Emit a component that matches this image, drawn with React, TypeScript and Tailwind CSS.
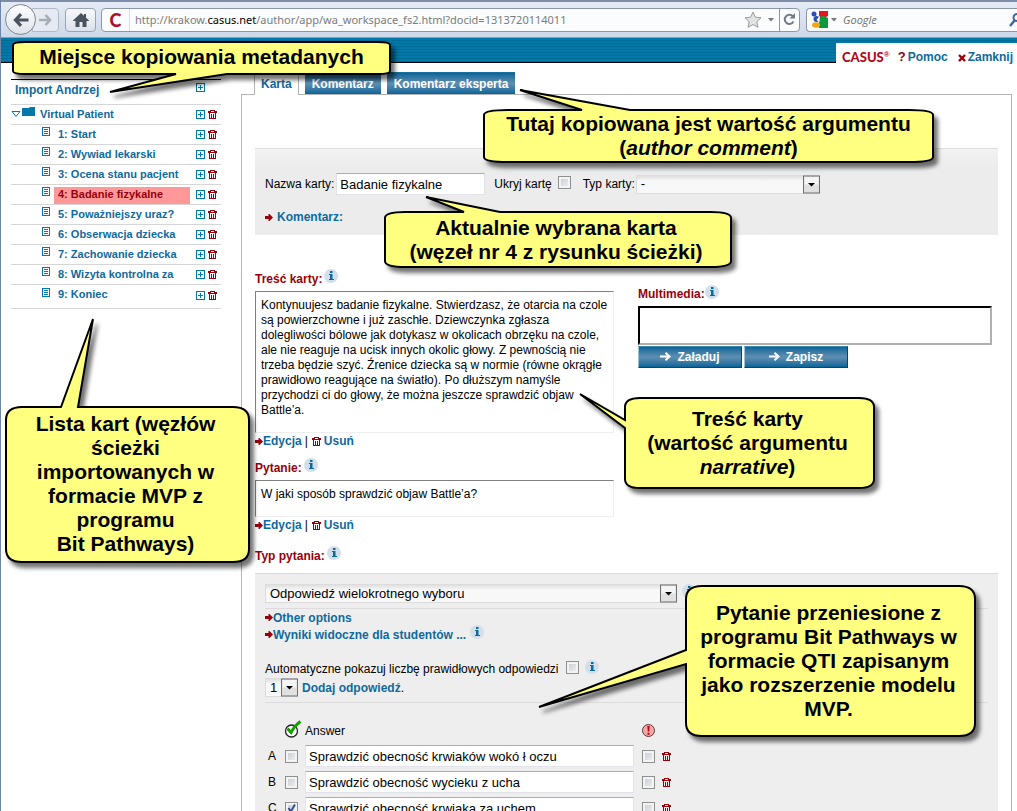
import React, { ReactNode } from "react";

const pages = [
  "1: Start",
  "2: Wywiad lekarski",
  "3: Ocena stanu pacjent",
  "4: Badanie fizykalne",
  "5: Poważniejszy uraz?",
  "6: Obserwacja dziecka",
  "7: Zachowanie dziecka",
  "8: Wizyta kontrolna za",
  "9: Koniec",
];

const answers = [
  { id: "A", text: "Sprawdzić obecność krwiaków wokó ł oczu", correct: false },
  { id: "B", text: "Sprawdzić obecność wycieku z ucha", correct: false },
  { id: "C", text: "Sprawdzić obecność krwiaka za uchem", correct: true },
];

function PlusIcon() {
  return (
    <svg width="9" height="9" viewBox="0 0 9 9" fill="none" stroke="#0079a8" shapeRendering="crispEdges" className="block">
      <path d="M.5.5h8v8h-8zM2 4.5h5M4.5 2v5" />
    </svg>
  );
}

function TrashIcon() {
  return (
    <svg width="9" height="9" viewBox="0 0 9 9" fill="none" stroke="#98000c" shapeRendering="crispEdges" className="block">
      <path d="M2 .5h5M0 1.5h3M6 1.5h3M0 2.5h9M1.5 3v6M3.5 4v4M5.5 4v4M7.5 3v6M1 8.5h7" />
    </svg>
  );
}

function DocIcon() {
  return (
    <svg width="8" height="9" viewBox="0 0 8 9" fill="none" stroke="#0079a8" shapeRendering="crispEdges" className="block">
      <path d="M.5.5h7v8h-7zM2 2.5h4M2 4.5h4M2 6.5h4" />
    </svg>
  );
}

function RedArrow() {
  return (
    <svg width="8" height="7" viewBox="0 0 8 7" fill="#98000c" className="block shrink-0">
      <path d="M0 2h3.500V0H4.500L8 3.500L4.500 7H3.500V5H0z" />
    </svg>
  );
}

function InfoIcon() {
  return (
    <svg width="14" height="14" viewBox="0 0 14 14" className="block shrink-0">
      <circle cx="7" cy="7" r="7" fill="#d3dfe8" />
      <path d="M6 2h2.500v2H6zM5 5h3.500v5H10v1H5v-1h1V6H5z" fill="#0a6a9c" />
    </svg>
  );
}

function Check({ label, checked = false }: { label: string; checked?: boolean }) {
  return (
    <span className="relative inline-block size-[13px] shrink-0 align-middle">
      <input
        type="checkbox"
        aria-label={label}
        defaultChecked={checked}
        className="peer block size-[13px] appearance-none border border-[#8e8f8f] bg-linear-to-br from-[#c4c9d0] to-[#f3f3f3] shadow-[inset_0_0_0_2px_#f4f4f4]"
      />
      <svg viewBox="0 0 13 13" className="pointer-events-none absolute inset-0 hidden peer-checked:block" fill="none" stroke="#33509a" strokeWidth="2">
        <path d="M3.500 6l2.300 3.500L10 2.500" />
      </svg>
    </span>
  );
}

function Drop({ label, value, className, field }: { label: string; value: string; className: string; field: string }) {
  return (
    <span className={"relative inline-block " + className}>
      <select
        id={field}
        aria-label={label}
        className="block h-full w-full appearance-none border border-[#dcdcdc] bg-linear-to-b from-[#e0e0e0] from-0% to-[#f8f8f8] to-30% pl-1 text-[13px] leading-4 text-black"
      >
        <option>{value}</option>
      </select>
      <svg width="17" height="18" viewBox="0 0 17 18" className="pointer-events-none absolute top-0 right-0 h-full">
        <rect x=".5" y=".5" width="16" height="17" fill="#e0e0e0" stroke="#6f6f6f" />
        <path d="M1.500 9V1.500h14V9" fill="#f5f5f5" />
        <path d="M5 7.500h7L8.500 11z" fill="#000" />
      </svg>
    </span>
  );
}

function EditLinks() {
  return (
    <div className="flex h-4 items-center font-bold text-[#0e6a9e]">
      <RedArrow />
      <a href="#edycja">Edycja</a>
      <span className="mx-[3px] font-normal text-black">|</span>
      <span className="mr-[3px] ml-px">
        <TrashIcon />
      </span>
      <a href="#usun">Usuń</a>
    </div>
  );
}

function SectionLabel({ children }: { children: ReactNode }) {
  return (
    <div className="flex h-6 items-start gap-[2px] pt-[2px] font-bold text-[#98000c]">
      <span className="pt-[2px] leading-4">{children}</span>
      <InfoIcon />
    </div>
  );
}

function Callout({ className, shape, children }: { className: string; shape: string; children: ReactNode }) {
  return (
    <div className={"absolute flex items-center justify-center text-center text-[21px] leading-6 font-bold text-black " + className}>
      <svg className="absolute inset-0 h-full w-full overflow-visible drop-shadow-[4px_5px_2px_rgba(0,0,0,0.55)]">
        <path d={shape} fill="#ffff80" stroke="#000" strokeWidth="2" strokeLinejoin="miter" strokeMiterlimit="3" />
      </svg>
      <p className="relative whitespace-nowrap">{children}</p>
    </div>
  );
}

function BrowserBar() {
  return (
    <header className="flex h-[38px] shrink-0 items-center border-t-2 border-b border-t-[#7f8ea8] border-b-[#8f9bb0] bg-linear-to-b from-[#e4ebf6] to-[#ccd8ea] pl-1 font-['Open_Sans',sans-serif] text-[12px]">
      <button aria-label="Wstecz" className="z-10 flex size-[31px] shrink-0 items-center justify-center rounded-full border border-[#7d8590] bg-linear-to-b from-white to-[#dfe3ea]">
        <svg width="16" height="14" viewBox="0 0 16 14" fill="none" stroke="#4a535e" strokeWidth="3.200">
          <path d="M8 1.200L2.500 7 8 12.800M3 7h12.500" />
        </svg>
      </button>
      <button aria-label="Dalej" className="-ml-1 flex h-6 w-[27px] shrink-0 items-center justify-center rounded-r border border-[#b0b8c4] bg-[#e6ebf3]">
        <svg width="13" height="12" viewBox="0 0 13 12" fill="none" stroke="#a6adb6" strokeWidth="2.600">
          <path d="M6.500 1L11 6l-4.500 5M10.500 6H0" />
        </svg>
      </button>
      <button aria-label="Strona główna" className="ml-[6px] flex h-6 w-[31px] shrink-0 items-center justify-center rounded border border-[#9aa3b1] bg-linear-to-b from-[#f6f8fb] to-[#dde3ec]">
        <svg width="16" height="14" viewBox="0 0 16 14" fill="#4a535e">
          <path d="M8 0l3 2.800V1h2v3.700L16 7.500V8h-2.500v6h-4V9h-3v5h-4V8H0v-.5z" />
        </svg>
      </button>
      <div className="ml-[5px] flex h-6 min-w-0 flex-1 items-center rounded border border-[#8d96a4] bg-[#fbfcfe]">
        <span className="flex w-7 shrink-0 justify-center border-r border-[#d5dbe4] font-['Lato',sans-serif] text-[18px] leading-[22px] font-black text-[#a8132b]">C</span>
        <div className="ml-[5px] min-w-0 flex-1 truncate font-['Noto_Sans',sans-serif] text-[11px] text-[#7b7b7b]">
          http://krakow.<span className="text-black">casus.net</span>/author/app/wa_workspace_fs2.html?docid=1313720114011
        </div>
        <svg width="18" height="17" viewBox="0 0 18 17" fill="#e3e3e3" stroke="#9b9b9b" className="shrink-0">
          <path d="M9 1l2.300 5.200 5.700.6-4.200 3.900 1.200 5.600L9 13.500l-5 2.800 1.200-5.600L1 6.800l5.700-.6z" />
        </svg>
        <svg width="6" height="4" viewBox="0 0 6 4" className="mr-[5px] ml-[6px] shrink-0"><path d="M0 0h6L3 3.500z" fill="#777" /></svg>
        <button aria-label="Odśwież" className="flex h-full w-5 shrink-0 items-center justify-center border-l border-[#8d96a4]">
          <svg width="13" height="13" viewBox="0 0 13 13" fill="none" stroke="#747b84" strokeWidth="2">
            <path d="M10 3.500A4.600 4.600 0 1 0 10.500 8.500" />
            <path d="M12 0v5.500H6.500z" fill="#747b84" stroke="none" />
          </svg>
        </button>
      </div>
      <div className="ml-[6px] flex h-6 w-[211px] shrink-0 items-center rounded-l border border-r-0 border-[#8d96a4] bg-[#fbfcfe] pl-1">
        <svg width="17" height="17" viewBox="0 0 17 17" className="shrink-0">
          <path d="M8 0h9v5L8 9z" fill="#e8161c" />
          <path d="M8 9q1-5 5-4l4 2v10H8z" fill="#0a9a3c" />
          <circle cx="3" cy="3" r="2.500" fill="#2a4fb5" />
          <circle cx="5.500" cy="8" r="3" fill="#2a4fb5" />
          <path d="M9 4.500L5.500 9l3 2z" fill="#fff" />
          <ellipse cx="5" cy="14" rx="4" ry="2.800" fill="#f3a512" />
        </svg>
        <svg width="6" height="4" viewBox="0 0 6 4" className="mr-[4px] ml-[3px] shrink-0"><path d="M0 0h6L3 3.500z" fill="#777" /></svg>
        <input aria-label="Google" placeholder="Google" className="ml-[2px] min-w-0 flex-1 bg-transparent text-[11px] italic placeholder:text-[#6f6f6f]" />
        <svg width="12" height="14" viewBox="0 0 12 14" fill="none" stroke="#3f66a5" strokeWidth="2" className="-mr-1 shrink-0">
          <circle cx="8" cy="4.500" r="3.500" />
          <path d="M5.500 7.500L1 13" strokeWidth="2.500" />
        </svg>
      </div>
    </header>
  );
}

function Sidebar() {
  return (
    <nav className="w-[240px] shrink-0 pt-4 pr-5 pl-[10px] text-[11px] font-bold text-[#0e6a9e]">
      <div className="flex h-[26px] items-start justify-between border-t border-b border-t-black border-b-[#d6d6d6] pr-4 pl-1">
        <a href="#import" className="pt-[2px] text-[12px] leading-4">Import Andrzej</a>
        <button aria-label="Dodaj" className="pt-[3px]"><PlusIcon /></button>
      </div>
      <div className="flex h-5 items-center border-b border-[#d6d6d6] pr-1">
        <svg width="10" height="7" viewBox="0 0 10 7" fill="none" stroke="#0079a8" className="shrink-0"><path d="M1 .5h8L5 5.500z" /></svg>
        <svg width="13" height="9" viewBox="0 0 13 9" fill="#0079a8" className="mb-[6px] ml-px shrink-0"><path d="M0 1h7l1-1h5v9H0z" /></svg>
        <a href="#vp" className="ml-[5px] flex-1 pb-[2px]">Virtual Patient</a>
        <button aria-label="Dodaj" className="mr-[3px]"><PlusIcon /></button>
        <button aria-label="Usuń"><TrashIcon /></button>
      </div>
      <ul className="h-[184px] border-b border-[#d6d6d6]">
        {pages.map((p, i) => (
          <li key={p} className={"flex h-5 items-center pr-1 " + (i < 8 ? "border-b border-[#d6d6d6]" : "")}>
            <span className="mr-1 mb-[6px] ml-[31px]"><DocIcon /></span>
            <a href={"#" + (i + 1)} className={"flex h-[17px] w-[136px] items-center pl-1 whitespace-nowrap " + (i === 3 ? "mt-[2px] bg-[#ff9999] pb-[3px] text-[#98000c]" : "pb-[2px]")}>{p}</a>
            <button aria-label="Dodaj" className="mr-[3px] ml-auto"><PlusIcon /></button>
            <button aria-label="Usuń"><TrashIcon /></button>
          </li>
        ))}
      </ul>
    </nav>
  );
}

const tabClass = "flex h-[22px] items-center border-t border-[#1b6f9c] bg-linear-to-b from-[#00659a] via-[#5f8fb0] to-[#00659a] px-[7px] text-white";
const btnClass = "flex h-[22px] w-[104px] items-center justify-center gap-[6px] border border-t-[#3d8bb5] border-r-[#1c3f55] border-b-[#1c3f55] border-l-[#9fc2d6] bg-linear-to-b from-[#00659a] via-[#5f8fb0] to-[#00659a] pb-px font-bold text-white";

function WhiteArrow() {
  return (
    <svg width="11" height="9" viewBox="0 0 11 9" fill="none" stroke="#fff" strokeWidth="2"><path d="M0 4.500h9M5.500 .8l4 3.700-4 3.700" /></svg>
  );
}

function Workspace() {
  return (
    <main className="flex min-w-0 flex-1 flex-col pt-[9px] pr-[5px]">
      <div className="flex items-end pl-[13px] font-bold">
        <button className="relative -mb-px flex h-[23px] items-center border-r border-l border-[#b4b4b4] bg-white px-[6px] text-[#0e6a9e]">Karta</button>
        <button className={"ml-[6px] " + tabClass}>Komentarz</button>
        <button className={"ml-[6px] " + tabClass}>Komentarz eksperta</button>
      </div>
      <div className="flex-1 border-t border-r border-l border-[#b4b4b4] px-[13px] pt-[53px]">
        <section className="h-[87px] border-t border-[#dcdcdc] bg-linear-to-b from-[#f3f3f3] to-[#ececec] to-20% px-[10px] pt-6">
          <div className="flex h-[22px] items-center">
            <label htmlFor="name">Nazwa karty:</label>
            <input id="name" defaultValue="Badanie fizykalne" className="ml-[2px] h-[22px] w-[149px] border border-[#e2e3ea] border-t-[#abadb3] bg-white pl-[3px] text-[13px]" />
            <span className="mr-[6px] ml-[9px]">Ukryj kartę</span>
            <span className="mb-1"><Check label="Ukryj kartę" /></span>
            <label htmlFor="type" className="ml-3">Typ karty:</label>
            <Drop field="type" label="Typ karty" value="-" className="ml-px h-[19px] w-[184px]" />
          </div>
          <div className="mt-[14px] flex h-4 items-center font-bold text-[#0e6a9e]">
            <RedArrow />
            <a href="#komentarz" className="ml-1">Komentarz:</a>
          </div>
        </section>

        <div className="mt-8 flex gap-6">
          <section className="w-[359px] shrink-0">
            <SectionLabel>Treść karty:</SectionLabel>
            <div className="h-[142px] border border-t-[#808080] border-r-[#eeeeee] border-b-[#eeeeee] border-l-[#808080] px-[5px] pt-[6px] leading-[15px]">
              Kontynuujesz badanie fizykalne. Stwierdzasz, że otarcia na czole
              <br />są powierzchowne i już zaschłe. Dziewczynka zgłasza
              <br />dolegliwości bólowe jak dotykasz w okolicach obrzęku na czole,
              <br />ale nie reaguje na ucisk innych okolic głowy. Z pewnością nie
              <br />trzeba będzie szyć. Źrenice dziecka są w normie (równe okrągłe
              <br />prawidłowo reagujące na światło). Po dłuższym namyśle
              <br />przychodzi ci do głowy, że można jeszcze sprawdzić objaw
              <br />Battle’a.
            </div>
            <EditLinks />
            <div className="mt-[7px]"><SectionLabel>Pytanie:</SectionLabel></div>
            <div className="h-[37px] border border-t-[#808080] border-r-[#eeeeee] border-b-[#eeeeee] border-l-[#808080] px-[5px] pt-[6px] leading-[15px]">
              W jaki sposób sprawdzić objaw Battle’a?
            </div>
            <EditLinks />
            <div className="mt-[11px]"><SectionLabel>Typ pytania:</SectionLabel></div>
          </section>
          <section className="mr-[6px] min-w-0 flex-1 pt-[15px]">
            <div className="flex h-6 items-start pt-[3px] font-bold text-[#98000c]">
              <label htmlFor="media" className="pt-[1px] leading-4">Multimedia:</label>
              <InfoIcon />
            </div>
            <input id="media" className="block h-[39px] w-full border-2 border-t-black border-r-[#b0b0b0] border-b-[#b0b0b0] border-l-black bg-white" />
            <div className="mt-px flex gap-[2px]">
              <button className={btnClass}><WhiteArrow />Załaduj</button>
              <button className={btnClass}><WhiteArrow />Zapisz</button>
            </div>
          </section>
        </div>

        <section className="mt-[5px] h-[300px] border-t border-[#dcdcdc] bg-[#eeeeee] px-[10px] pt-[10px]">
          <div className="flex items-start gap-[5px] border-b border-[#dcdcdc] pb-[5px]">
            <Drop field="qtype" label="Typ pytania" value="Odpowiedź wielokrotnego wyboru" className="h-[19px] w-[412px]" />
            <InfoIcon />
          </div>
          <div className="flex h-[17px] items-center font-bold text-[#0e6a9e]">
            <RedArrow /><a href="#opcje">Other options</a>
          </div>
          <div className="flex h-[17px] items-center font-bold text-[#0e6a9e]">
            <RedArrow /><a href="#wyniki" className="mr-1">Wyniki widoczne dla studentów ...</a>
            <span className="mb-[5px]"><InfoIcon /></span>
          </div>
          <div className="mt-4 flex h-5 items-center">
            <span className="mr-2">Automatyczne pokazuj liczbę prawidłowych odpowiedzi</span>
            <span className="mr-[6px] mb-1"><Check label="Automatyczne pokazuj liczbę prawidłowych odpowiedzi" /></span>
            <span className="mb-1"><InfoIcon /></span>
          </div>
          <div className="-mt-px flex items-center border-b border-[#dcdcdc] pb-[5px]">
            <Drop field="count" label="Liczba odpowiedzi" value="1" className="mr-1 h-[19px] w-[33px]" />
            <a href="#dodaj" className="font-bold text-[#0e6a9e]">Dodaj odpowiedź</a>.
          </div>
          <table className="mt-[15px] table-fixed border-collapse">
            <thead>
              <tr className="h-[25px] text-left">
                <th className="w-5 p-0" />
                <th className="w-5 p-0">
                  <svg width="18" height="18" viewBox="0 0 18 18" fill="none" className="-mt-1 -ml-px block">
                    <circle cx="7.500" cy="11" r="6" stroke="#222" strokeWidth="1.300" fill="#fff" />
                    <path d="M3.500 8.500L7 12.500Q11 5 16.500 1.500" stroke="#15a000" strokeWidth="3" />
                  </svg>
                </th>
                <th className="w-[337px] p-0 font-normal">Answer</th>
                <th className="w-5 p-0">
                  <svg width="13" height="13" viewBox="0 0 13 13" className="block">
                    <circle cx="6.500" cy="6.500" r="6" fill="#f7a8a8" stroke="#5c3a3a" />
                    <path d="M5.300 2h2.400L7.200 7.500H5.800zM5.500 8.800h2v2h-2z" fill="#c00010" />
                  </svg>
                </th>
                <th className="w-4 p-0" />
              </tr>
            </thead>
            <tbody>
              {answers.map((a) => (
                <tr key={a.id} className="h-[26px]">
                  <td className="p-0 pl-[3px]">{a.id}</td>
                  <td className="p-0 leading-none"><Check label={"Poprawna " + a.id} checked={a.correct} /></td>
                  <td className="p-0">
                    <input aria-label={"Odpowiedź " + a.id} defaultValue={a.text} className="block h-[22px] w-[329px] border border-[#e2e3ea] border-t-[#abadb3] bg-white pl-[3px] text-[13px]" />
                  </td>
                  <td className="p-0 leading-none"><Check label={"Krytyczna " + a.id} /></td>
                  <td className="p-0"><button aria-label={"Usuń " + a.id} className="block"><TrashIcon /></button></td>
                </tr>
              ))}
            </tbody>
          </table>
        </section>
      </div>
    </main>
  );
}

export default function App() {
  return (
    <div className="relative flex h-screen flex-col overflow-hidden border-l border-[#6f86a6] bg-white font-['Liberation_Sans',Arial,sans-serif] text-[12px] leading-4 text-black">
      <BrowserBar />
      <div className="flex h-[25px] shrink-0 justify-end border-b border-black bg-[repeating-linear-gradient(to_bottom,#0079a8_0px,#0079a8_2px,#006a98_2px,#006a98_3px)] pt-[5px]">
        <div className="-mb-px flex items-center bg-white pt-[7px] pr-1 pl-[6px] font-bold text-[#0e6a9e]">
          <span className="font-['Lato',sans-serif] text-[13px] font-black text-[#b00a1e]">CASUS</span>
          <span className="mb-1 text-[8px] text-[#b00a1e]">®</span>
          <span className="ml-2 text-[13px] text-[#98000c]">?</span>
          <a href="#pomoc" className="ml-[2px]">Pomoc</a>
          <svg width="8" height="8" viewBox="0 0 8 8" stroke="#98000c" strokeWidth="2.400" className="mt-[2px] mr-[2px] ml-[10px]"><path d="M1 1l6 6M7 1L1 7" /></svg>
          <a href="#zamknij">Zamknij</a>
        </div>
      </div>
      <div className="flex min-h-0 flex-1">
        <Sidebar />
        <Workspace />
      </div>

      <Callout className="top-[42px] left-[12px] h-[32px] w-[377px] pb-[2px]" shape="M12 0H365Q377 0 377 3V29Q377 32 365 32H214L97 50L163 32H12Q0 32 0 29V3Q0 0 12 0Z">
        Miejsce kopiowania metadanych
      </Callout>
      <Callout className="top-[110px] left-[483px] h-[52px] w-[449px]" shape="M24 0H98L36 -20L146 0H425Q449 0 449 5V47Q449 52 425 52H24Q0 52 0 47V5Q0 0 24 0Z">
        Tutaj kopiowana jest wartość argumentu
        <br />(<em>author comment</em>)
      </Callout>
      <Callout className="top-[212px] left-[384px] h-[55px] w-[346px] pr-1" shape="M20 0H79L41 -15L115 0H326Q346 0 346 6V49Q346 55 326 55H20Q0 55 0 49V6Q0 0 20 0Z">
        Aktualnie wybrana karta
        <br />(węzeł nr 4 z rysunku ścieżki)
      </Callout>
      <Callout className="top-[398px] left-[624px] h-[90px] w-[249px] pr-1" shape="M15 0H234Q249 0 249 9V81Q249 90 234 90H15Q0 90 0 81V30L-45 -4L0 22V9Q0 0 15 0Z">
        Treść karty
        <br />(wartość argumentu
        <br /><em>narrative</em>)
      </Callout>
      <Callout className="top-[407px] left-[5px] h-[155px] w-[243px] pr-1 pb-[2px]" shape="M16 0H55L87 -88L72 0H227Q243 0 243 13V142Q243 155 227 155H16Q0 155 0 142V13Q0 0 16 0Z">
        Lista kart (węzłów
        <br />ścieżki
        <br />importowanych w
        <br />formacie MVP z
        <br />programu
        <br />Bit Pathways)
      </Callout>
      <Callout className="top-[586px] left-[685px] h-[150px] w-[289px] pr-1" shape="M16 0H273Q289 0 289 13V137Q289 150 273 150H16Q0 150 0 137V78L-147 121L0 64V13Q0 0 16 0Z">
        Pytanie przeniesione z
        <br />programu Bit Pathways w
        <br />formacie QTI zapisanym
        <br />jako rozszerzenie modelu
        <br />MVP.
      </Callout>
    </div>
  );
}
